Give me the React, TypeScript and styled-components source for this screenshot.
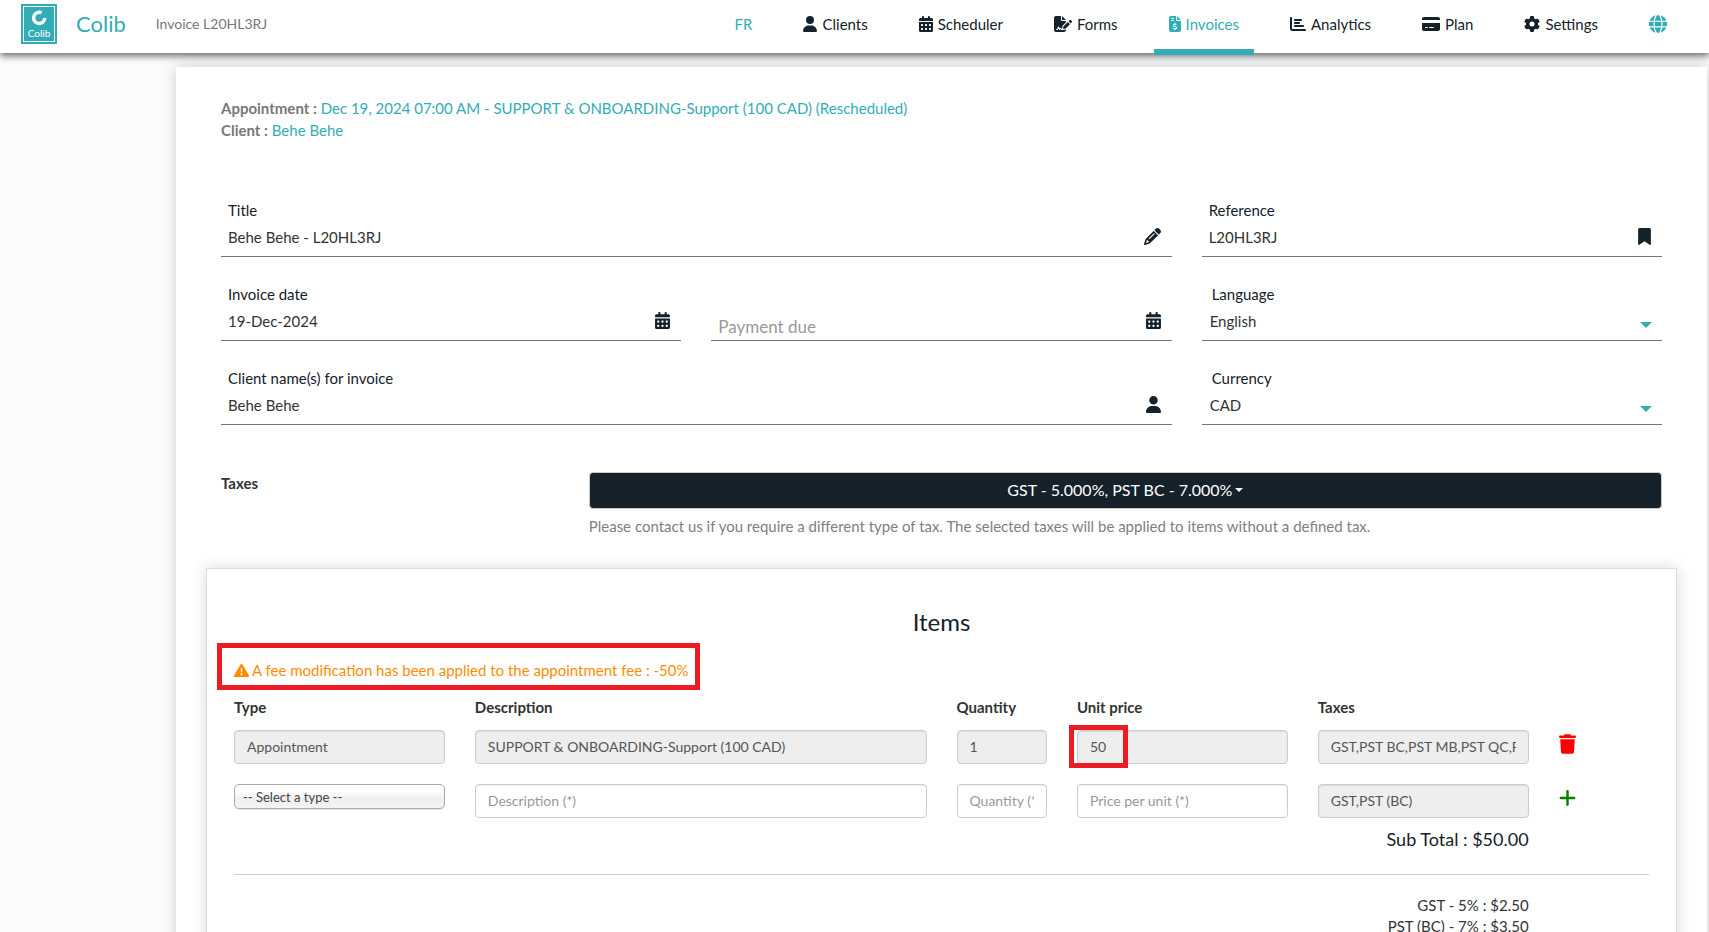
import React from 'react';
import styled, { createGlobalStyle, css } from 'styled-components';
import {
  FaBookmark,
  FaCalendarDays,
  FaChartBar,
  FaCreditCard,
  FaFileInvoiceDollar,
  FaFileSignature,
  FaGear,
  FaGlobe,
  FaPencil,
  FaPlus,
  FaTrash,
  FaTriangleExclamation,
  FaUser,
} from 'react-icons/fa6';

const teal = '#32adb5';
const ink = '#15212b';
const grey = '#777777';
const red = '#ed1c24';

const GlobalStyle = createGlobalStyle`
  *, *::before, *::after { box-sizing: border-box; }
  html { scrollbar-width: none; }
  body {
    margin: 0;
    background: #fbfdfc;
    color: #333333;
    font-family: Lato, "Liberation Sans", sans-serif;
    font-size: 15px;
    line-height: 22px;
  }
  input, select, button { font: inherit; color: inherit; }
  a { color: ${teal}; text-decoration: none; }
`;

const Header = styled.header`
  position: relative;
  z-index: 2;
  display: flex;
  align-items: center;
  height: 53px;
  padding: 0 27px 0 21px;
  background: #ffffff;
  box-shadow: 0 3px 7px rgba(21, 24, 32, 0.65);
`;

const LogoLink = styled.a`
  display: flex;
  margin-bottom: 5px;
`;

const Brand = styled.a`
  margin: 0 30px 6px 19px;
  font-size: 22px;
  line-height: 30px;
`;

const PageName = styled.span`
  margin-bottom: 5px;
  color: ${grey};
  font-size: 14px;
`;

const Nav = styled.nav`
  display: flex;
  gap: 21px;
  height: 100%;
  margin-left: auto;
`;

const NavLink = styled.a<{ $iconWidth?: number; $accent?: boolean; $active?: boolean }>`
  position: relative;
  display: flex;
  align-items: center;
  gap: 5px;
  padding: 0 15px 5px;
  color: ${(p) => (p.$accent || p.$active ? teal : ink)};
  white-space: nowrap;

  svg {
    width: ${(p) => p.$iconWidth ?? 16}px;
    height: 16px;
  }

  ${(p) =>
    p.$active &&
    css`
      &::after {
        content: '';
        position: absolute;
        right: 0;
        bottom: -2px;
        left: 0;
        height: 6px;
        background: ${teal};
      }
    `}
`;

const GlobeLink = styled(NavLink)`
  svg {
    height: 18px;
  }
`;

const Page = styled.main`
  padding: 14px 2px 0 176px;
`;

const Sheet = styled.div`
  padding: 30px;
  background: #ffffff;
  box-shadow: 0 0 14px rgba(0, 0, 0, 0.2);
`;

const Summary = styled.div`
  padding: 0 15px;
  color: ${grey};
`;

const SummaryLine = styled.p`
  margin: 0;
`;

const FormGrid = styled.form`
  display: grid;
  grid-template-columns: repeat(3, minmax(0, 1fr));
  gap: 26px 30px;
  margin-top: 58px;
  padding: 0 15px;
`;

const FieldBox = styled.div<{ $wide?: boolean; $floating?: boolean }>`
  display: flex;
  flex-direction: column;
  justify-content: flex-end;
  position: relative;
  height: 58px;
  grid-column: span ${(p) => (p.$wide ? 2 : 1)};
  padding-bottom: ${(p) => (p.$floating ? 0 : 4)}px;
  border-bottom: 1px solid #777777;
`;

const FieldLabel = styled.label<{ $indent?: boolean }>`
  padding-left: ${(p) => (p.$indent ? 10 : 7)}px;
  color: ${ink};
`;

const FieldInput = styled.input`
  width: 100%;
  height: 31px;
  padding: 0 40px 0 7px;
  border: 0;
  outline: 0;
  background: transparent;
`;

const FloatingInput = styled(FieldInput)`
  height: 27px;
  font-size: 17px;

  &::placeholder {
    color: #999999;
    opacity: 1;
  }
`;

const FieldSelect = styled.select`
  width: 100%;
  height: 31px;
  padding: 0 30px 0 8px;
  border: 0;
  outline: 0;
  background: transparent;
  appearance: none;
`;

const FieldIcon = styled.span<{ $width: number }>`
  position: absolute;
  right: 11px;
  bottom: 11px;
  display: flex;
  color: ${ink};

  svg {
    width: ${(p) => p.$width}px;
    height: 17px;
  }
`;

const FieldCaret = styled.span`
  position: absolute;
  right: 10px;
  bottom: 12px;
  border-top: 6px solid ${teal};
  border-right: 6px solid transparent;
  border-left: 6px solid transparent;
  pointer-events: none;
`;

const TaxRow = styled.section`
  display: grid;
  grid-template-columns: minmax(0, 1fr) minmax(0, 3fr);
  margin-top: 47px;
`;

const TaxTitle = styled.strong`
  padding-left: 15px;
`;

const TaxBody = styled.div`
  padding: 0 15px;
`;

const TaxButton = styled.button`
  display: flex;
  align-items: center;
  justify-content: center;
  gap: 3px;
  width: 100%;
  height: 37px;
  padding: 0 12px 2px;
  border: 1px solid #cccccc;
  border-radius: 4px;
  background: ${ink};
  color: #ffffff;
  font-size: 16px;
`;

const ButtonCaret = styled.span`
  border-top: 4px solid #ffffff;
  border-right: 4px solid transparent;
  border-left: 4px solid transparent;
`;

const Hint = styled.p`
  margin: 6px 0 0;
  color: #808080;
`;

const ItemsCard = styled.section`
  margin-top: 31px;
  padding: 38px 27px 40px;
  border: 1px solid #dddddd;
  background: #ffffff;
  box-shadow: 0 0 14px rgba(0, 0, 0, 0.15);
`;

const ItemsTitle = styled.h2`
  margin: 0 0 22px;
  color: ${ink};
  font-size: 24px;
  font-weight: 400;
  line-height: 30px;
  text-align: center;
`;

const Notice = styled.p`
  position: relative;
  display: flex;
  align-items: center;
  gap: 3px;
  width: fit-content;
  margin: 0 0 15px;
  color: #ff8c00;
`;

const NoticeFrame = styled.span`
  position: absolute;
  inset: -16px -11px -9px -17px;
  border: 5px solid ${red};
  pointer-events: none;
`;

const PriceFrame = styled.span`
  position: absolute;
  top: -5px;
  left: 7px;
  width: 59px;
  height: 43px;
  border: 5px solid ${red};
  pointer-events: none;
`;

const ItemsTable = styled.table`
  width: calc(100% + 30px);
  margin: 0 -15px;
  border-collapse: collapse;
  table-layout: fixed;
`;

const HeadCell = styled.th<{ $share: number }>`
  width: calc(100% * ${(p) => p.$share} / 12);
  padding: 0 15px 12px;
  font-weight: 700;
  text-align: left;
`;

const Cell = styled.td`
  position: relative;
  height: 34px;
  padding: 0 15px;
  vertical-align: top;

  tr + tr > & {
    height: 54px;
    padding-top: 20px;
  }
`;

const CellInput = styled.input`
  display: block;
  width: 100%;
  height: 34px;
  padding: 5px 12px 7px;
  border: 1px solid #cccccc;
  border-radius: 4px;
  outline: 0;
  background: #ffffff;
  box-shadow: inset 0 1px 1px rgba(0, 0, 0, 0.08);
  color: #555555;
  font-size: 14px;

  &:read-only {
    background: #eeeeee;
  }

  &::placeholder {
    color: #999999;
    opacity: 1;
  }
`;

const TypeSelect = styled.select`
  display: block;
  width: 100%;
  height: 25px;
  padding: 0 8px;
  border: 1px solid #aaaaaa;
  border-radius: 5px;
  background: linear-gradient(#ffffff 20%, #f6f6f6 50%, #eeeeee 52%, #f4f4f4 100%);
  box-shadow: 0 1px 1px rgba(0, 0, 0, 0.1);
  color: #444444;
  font-size: 13px;
  appearance: none;
`;

const RowButton = styled.button<{ $color: string }>`
  display: flex;
  padding: 4px 0;
  border: 0;
  background: transparent;
  color: ${(p) => p.$color};

  svg {
    width: 17px;
    height: 20px;
  }
`;

const Amounts = styled.div`
  margin-right: calc((100% + 30px) / 12);
  text-align: right;
`;

const SubTotal = styled.p`
  margin: 9px 0 23px;
  color: ${ink};
  font-size: 18px;
  line-height: 24px;
`;

const Divider = styled.hr`
  height: 1px;
  margin: 0 0 20px;
  border: 0;
  background: #cccccc;
`;

const TaxLine = styled.p`
  margin: 0;
  line-height: 21px;
`;

const Logo = () => (
  <svg width="36" height="40" viewBox="0 0 36 40" role="img" aria-label="Colib">
    <rect width="36" height="40" fill={teal} />
    <rect x="2.5" y="2.5" width="31" height="35" fill="none" stroke="#ffffff" strokeWidth="1" />
    <path
      d="M20.6 8.8A5.6 5.6 0 1 0 23.8 14"
      fill="none"
      stroke="#ffffff"
      strokeWidth="3.4"
    />
    <text x="18" y="33" fill="#ffffff" fontFamily="Lato, sans-serif" fontSize="10" textAnchor="middle">
      Colib
    </text>
  </svg>
);

const navItems = [
  { label: 'Clients', icon: <FaUser />, iconWidth: 14 },
  { label: 'Scheduler', icon: <FaCalendarDays />, iconWidth: 14 },
  { label: 'Forms', icon: <FaFileSignature />, iconWidth: 18 },
  { label: 'Invoices', icon: <FaFileInvoiceDollar />, iconWidth: 12, active: true },
  { label: 'Analytics', icon: <FaChartBar />, iconWidth: 16 },
  { label: 'Plan', icon: <FaCreditCard />, iconWidth: 18 },
  { label: 'Settings', icon: <FaGear />, iconWidth: 16 },
];

const columns = [
  { title: 'Type', share: 2 },
  { title: 'Description', share: 4 },
  { title: 'Quantity', share: 1 },
  { title: 'Unit price', share: 2 },
  { title: 'Taxes', share: 2 },
];

type TextFieldProps = {
  id: string;
  label: string;
  value: string;
  icon: React.ReactNode;
  iconWidth: number;
  wide?: boolean;
};

const TextField = ({ id, label, value, icon, iconWidth, wide }: TextFieldProps) => (
  <FieldBox $wide={wide}>
    <FieldLabel htmlFor={id}>{label}</FieldLabel>
    <FieldInput id={id} type="text" defaultValue={value} />
    <FieldIcon $width={iconWidth}>{icon}</FieldIcon>
  </FieldBox>
);

const SelectField = ({ id, label, options }: { id: string; label: string; options: string[] }) => (
  <FieldBox>
    <FieldLabel htmlFor={id} $indent>
      {label}
    </FieldLabel>
    <FieldSelect id={id}>
      {options.map((option) => (
        <option key={option}>{option}</option>
      ))}
    </FieldSelect>
    <FieldCaret />
  </FieldBox>
);

export default function App() {
  return (
    <>
      <GlobalStyle />
      <Header>
        <LogoLink href="#">
          <Logo />
        </LogoLink>
        <Brand href="#">Colib</Brand>
        <PageName>Invoice L20HL3RJ</PageName>
        <Nav>
          <NavLink href="#" $accent>
            FR
          </NavLink>
          {navItems.map((item) => (
            <NavLink key={item.label} href="#" $iconWidth={item.iconWidth} $active={item.active}>
              {item.icon}
              {item.label}
            </NavLink>
          ))}
          <GlobeLink href="#" $iconWidth={18} $accent aria-label="Website">
            <FaGlobe />
          </GlobeLink>
        </Nav>
      </Header>

      <Page>
        <Sheet>
          <Summary>
            <SummaryLine>
              <strong>Appointment :</strong>{' '}
              <a href="#">Dec 19, 2024 07:00 AM - SUPPORT &amp; ONBOARDING-Support (100 CAD) (Rescheduled)</a>
            </SummaryLine>
            <SummaryLine>
              <strong>Client :</strong> <a href="#">Behe Behe</a>
            </SummaryLine>
          </Summary>

          <FormGrid>
            <TextField
              id="title"
              label="Title"
              value="Behe Behe - L20HL3RJ"
              icon={<FaPencil />}
              iconWidth={17}
              wide
            />
            <TextField id="reference" label="Reference" value="L20HL3RJ" icon={<FaBookmark />} iconWidth={13} />
            <TextField
              id="invoice-date"
              label="Invoice date"
              value="19-Dec-2024"
              icon={<FaCalendarDays />}
              iconWidth={15}
            />
            <FieldBox $floating>
              <FloatingInput type="text" placeholder="Payment due" aria-label="Payment due" />
              <FieldIcon $width={15}>
                <FaCalendarDays />
              </FieldIcon>
            </FieldBox>
            <SelectField id="language" label="Language" options={['English', 'French']} />
            <TextField
              id="client-name"
              label="Client name(s) for invoice"
              value="Behe Behe"
              icon={<FaUser />}
              iconWidth={15}
              wide
            />
            <SelectField id="currency" label="Currency" options={['CAD', 'USD']} />
          </FormGrid>

          <TaxRow>
            <TaxTitle>Taxes</TaxTitle>
            <TaxBody>
              <TaxButton type="button">
                GST - 5.000%, PST BC - 7.000%
                <ButtonCaret />
              </TaxButton>
              <Hint>
                Please contact us if you require a different type of tax. The selected taxes will be applied to items
                without a defined tax.
              </Hint>
            </TaxBody>
          </TaxRow>

          <ItemsCard>
            <ItemsTitle>Items</ItemsTitle>
            <Notice>
              <FaTriangleExclamation />
              A fee modification has been applied to the appointment fee : -50%
              <NoticeFrame />
            </Notice>
            <ItemsTable>
              <thead>
                <tr>
                  {columns.map((column) => (
                    <HeadCell key={column.title} $share={column.share} scope="col">
                      {column.title}
                    </HeadCell>
                  ))}
                  <HeadCell as="td" $share={1} />
                </tr>
              </thead>
              <tbody>
                <tr>
                  <Cell>
                    <CellInput readOnly aria-label="Type" value="Appointment" />
                  </Cell>
                  <Cell>
                    <CellInput readOnly aria-label="Description" value="SUPPORT & ONBOARDING-Support (100 CAD)" />
                  </Cell>
                  <Cell>
                    <CellInput readOnly aria-label="Quantity" value="1" />
                  </Cell>
                  <Cell>
                    <CellInput readOnly aria-label="Unit price" value="50" />
                    <PriceFrame />
                  </Cell>
                  <Cell>
                    <CellInput readOnly aria-label="Taxes" value="GST,PST BC,PST MB,PST QC,PST SK" />
                  </Cell>
                  <Cell>
                    <RowButton type="button" $color="#ff0000" aria-label="Delete item">
                      <FaTrash />
                    </RowButton>
                  </Cell>
                </tr>
                <tr>
                  <Cell>
                    <TypeSelect aria-label="New item type">
                      <option>-- Select a type --</option>
                    </TypeSelect>
                  </Cell>
                  <Cell>
                    <CellInput aria-label="New item description" placeholder="Description (*)" />
                  </Cell>
                  <Cell>
                    <CellInput aria-label="New item quantity" placeholder="Quantity (*)" />
                  </Cell>
                  <Cell>
                    <CellInput aria-label="New item price" placeholder="Price per unit (*)" />
                  </Cell>
                  <Cell>
                    <CellInput readOnly aria-label="New item taxes" value="GST,PST (BC)" />
                  </Cell>
                  <Cell>
                    <RowButton type="button" $color="#008000" aria-label="Add item">
                      <FaPlus />
                    </RowButton>
                  </Cell>
                </tr>
              </tbody>
            </ItemsTable>
            <Amounts>
              <SubTotal>Sub Total : $50.00</SubTotal>
            </Amounts>
            <Divider />
            <Amounts>
              <TaxLine>GST - 5% : $2.50</TaxLine>
              <TaxLine>PST (BC) - 7% : $3.50</TaxLine>
            </Amounts>
          </ItemsCard>
        </Sheet>
      </Page>
    </>
  );
}
